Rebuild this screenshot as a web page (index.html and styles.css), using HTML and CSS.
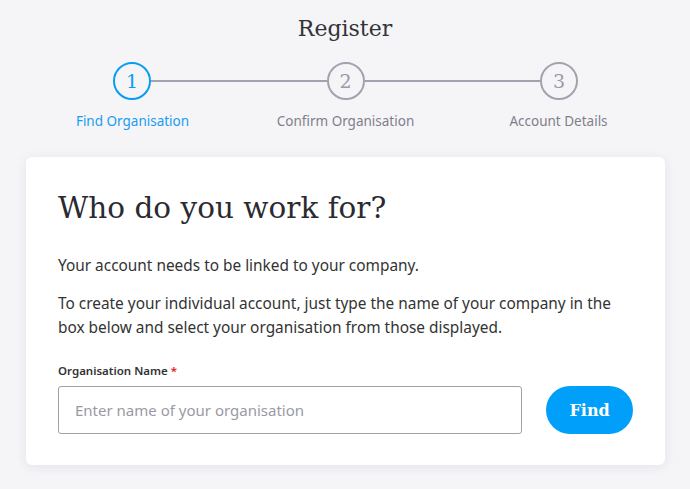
FILE: index.html
```html
<!DOCTYPE html>
<html>
<head>
<meta charset="utf-8">
<link rel="stylesheet" href="styles.css">
</head>
<body>
<div class="page">
  <h1 class="title">Register</h1>
  <div class="stepper">
    <div class="circles">
      <div class="circle active">1</div>
      <div class="line"></div>
      <div class="circle">2</div>
      <div class="line"></div>
      <div class="circle">3</div>
    </div>
    <div class="labels">
      <div class="label active">Find Organisation</div>
      <div class="label">Confirm Organisation</div>
      <div class="label">Account Details</div>
    </div>
  </div>
  <div class="card">
    <h2 class="heading">Who do you work for?</h2>
    <p class="text first">Your account needs to be linked to your company.</p>
    <p class="text">To create your individual account, just type the name of your company in the box below and select your organisation from those displayed.</p>
    <div class="field-label">Organisation Name <span class="req">*</span></div>
    <div class="row">
      <input class="input" type="text" placeholder="Enter name of your organisation">
      <button class="btn">Find</button>
    </div>
  </div>
</div>
</body>
</html>
```
FILE: styles.css
```css
html, body {
  margin: 0;
  padding: 0;
}
body {
  background: #f5f5f8;
  font-family: "Noto Sans", sans-serif;
  color: #333;
  width: 690px;
  height: 489px;
  overflow: hidden;
}
.page {
  padding-top: 14px;
}
.title {
  margin: 0;
  text-align: center;
  font-family: "DejaVu Serif", serif;
  font-weight: normal;
  font-size: 22px;
  line-height: 30px;
  color: #333338;
}
.stepper {
  margin: 18px 25px 0 26px;
}
.circles {
  display: flex;
  align-items: center;
  margin: 0 87px;
}
.circle {
  box-sizing: border-box;
  width: 38px;
  height: 38px;
  border-radius: 50%;
  border: 2px solid #a3a3b0;
  display: flex;
  align-items: center;
  justify-content: center;
  font-family: "DejaVu Serif", serif;
  font-size: 19px;
  color: #9a9aa8;
}
.circle.active {
  border-color: #0a9cf0;
  color: #0a9cf0;
}
.line {
  flex: 1;
  height: 2px;
  background: #a3a3b0;
}
.labels {
  display: grid;
  grid-template-columns: repeat(3, 1fr);
  margin-top: 12px;
}
.label {
  text-align: center;
  font-size: 13.5px;
  line-height: 18px;
  color: #7f7f8a;
}
.label.active {
  color: #1a9cf0;
}
.card {
  margin: 27px 25px 0 26px;
  background: #fff;
  border-radius: 6px;
  box-shadow: 0 2px 12px rgba(40, 40, 80, 0.08);
  padding: 29px 32px 31px 32px;
}
.heading {
  margin: 0;
  font-family: "DejaVu Serif", serif;
  font-weight: normal;
  font-size: 29.5px;
  line-height: 44px;
  color: #2a2a30;
}
.text {
  margin: 0;
  font-size: 15.4px;
  line-height: 24px;
  color: #333;
}
.text.first {
  margin-top: 24px;
  margin-bottom: 14px;
}
.field-label {
  margin-top: 23px;
  font-size: 11.5px;
  font-weight: 600;
  line-height: 16px;
  color: #333;
}
.req {
  color: #e02020;
}
.row {
  display: flex;
  align-items: center;
  margin-top: 7px;
}
.input {
  box-sizing: border-box;
  width: 465px;
  height: 48px;
  border: 1px solid #a0a0aa;
  border-radius: 3px;
  padding: 0 16px;
  font-family: "Noto Sans", sans-serif;
  font-size: 15px;
  color: #333;
  outline: none;
}
.input::placeholder {
  color: #9a9aa4;
}
.btn {
  margin-left: 24px;
  width: 87px;
  height: 48px;
  border: none;
  border-radius: 24px;
  background: #00a0fa;
  color: #fff;
  font-family: "DejaVu Serif", serif;
  font-weight: bold;
  font-size: 16px;
  padding: 0;
}
```
